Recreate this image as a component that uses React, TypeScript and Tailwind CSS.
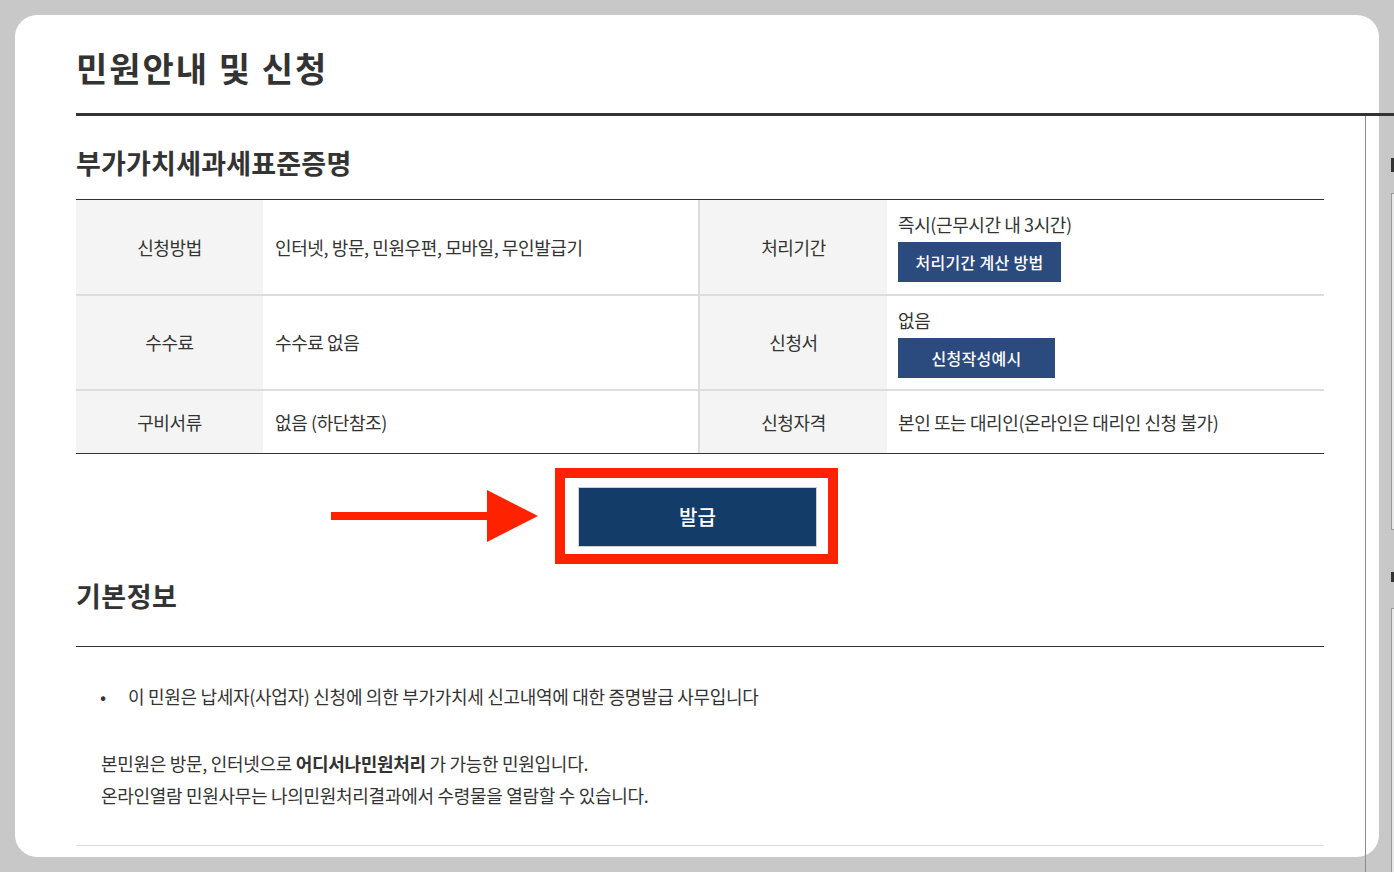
const font = {
  fontFamily: '"Noto Sans CJK KR", "Noto Sans", sans-serif',
};

type Row = {
  label1: string;
  value1: string;
  label2: string;
  value2: string;
  button?: { text: string; width: string };
  height: string;
};

const rows: Row[] = [
  {
    label1: "신청방법",
    value1: "인터넷, 방문, 민원우편, 모바일, 무인발급기",
    label2: "처리기간",
    value2: "즉시(근무시간 내 3시간)",
    button: { text: "처리기간 계산 방법", width: "w-[163px]" },
    height: "h-[96px]",
  },
  {
    label1: "수수료",
    value1: "수수료 없음",
    label2: "신청서",
    value2: "없음",
    button: { text: "신청작성예시", width: "w-[157px]" },
    height: "h-[95px]",
  },
  {
    label1: "구비서류",
    value1: "없음 (하단참조)",
    label2: "신청자격",
    value2: "본인 또는 대리인(온라인은 대리인 신청 불가)",
    height: "h-[62px]",
  },
];

function InfoTable() {
  return (
    <div className="border-t border-b border-[#333] text-[18px] tracking-[-0.4px] text-[#333]">
      {rows.map((row, i) => (
        <div
          key={row.label1}
          className={`flex ${row.height} ${i < rows.length - 1 ? "border-b-2 border-[#dddddd]" : ""}`}
        >
          <div className="w-[187px] bg-[#f4f4f4] flex items-center justify-center">
            {row.label1}
          </div>
          <div className="w-[435px] flex items-center pl-[12px]">{row.value1}</div>
          <div className="w-[2px] bg-[#dddddd]" />
          <div className="w-[187px] bg-[#f4f4f4] flex items-center justify-center">
            {row.label2}
          </div>
          <div className="flex-1 flex flex-col justify-center pl-[11px]">
            <div className="leading-[24px]">{row.value2}</div>
            {row.button && (
              <div
                className={`${row.button.width} mt-[6px] h-[40px] bg-[#2b4a7d] text-white text-[16px] tracking-[0.3px] font-medium flex items-center justify-center`}
              >
                {row.button.text}
              </div>
            )}
          </div>
        </div>
      ))}
    </div>
  );
}

function IssueButton() {
  return (
    <div className="flex items-center pl-[255px] mt-[14px]">
      {/* annotation arrow */}
      <svg width="207" height="53" viewBox="0 0 207 53">
        <rect x="0" y="22" width="157" height="8" fill="#ff2200" />
        <polygon points="156,0 207,26 156,52" fill="#ff2200" />
      </svg>
      <div className="ml-[17px] w-[283px] h-[96px] border-[10px] border-[#ff2200] pt-[9px] pl-[13px]">
        <div className="w-[239px] h-[60px] bg-[#143c68] border border-[#d0d0d0] text-white text-[20px] font-medium flex items-center justify-center">
          발급
        </div>
      </div>
    </div>
  );
}

function SideStrip() {
  return (
    <div className="w-[15px] flex flex-col items-end">
      <div className="mt-[158px] w-[3px] h-[14px] bg-[#333]" />
      <div className="mt-[21px] w-[3px] h-[337px] border-l border-t border-b border-[#9a9a9a] bg-[#e8e8e8]" />
      <div className="mt-[42px] w-[3px] h-[10px] bg-[#333]" />
      <div className="mt-[26px] w-[3px] flex-1 border-l border-t border-[#9a9a9a] bg-[#e8e8e8]" />
    </div>
  );
}

export default function App() {
  return (
    <div className="h-[872px] overflow-hidden bg-[#c9c8c9] flex" style={font}>
      <div className="ml-[15px] mt-[15px] w-[1364px] h-[842px] bg-white rounded-[22px] flex flex-col">
        <h1 className="pl-[61px] pt-[31px] text-[34px] leading-[44px] font-bold text-[#333] tracking-[2px]">
          민원안내 및 신청
        </h1>
        <div className="mt-[23px] ml-[61px] -mr-[15px] h-[3px] bg-[#333]" />

        <div className="flex flex-1">
          <div className="ml-[61px] w-[1248px] text-[#333]">
            <h2 className="mt-[29px] text-[27px] leading-[36px] font-semibold tracking-[0.2px]">
              부가가치세과세표준증명
            </h2>
            <div className="mt-[18px]">
              <InfoTable />
            </div>

            <IssueButton />

            <h2 className="mt-[14px] text-[27px] leading-[36px] font-semibold tracking-[0.5px]">
              기본정보
            </h2>
            <div className="mt-[32px] h-px bg-[#333]" />

            <ul className="mt-[37px] text-[18px] leading-[24px] tracking-[-0.3px]">
              <li className="flex pl-[24px]">
                <span className="w-[28px]">•</span>
                <span>이 민원은 납세자(사업자) 신청에 의한 부가가치세 신고내역에 대한 증명발급 사무입니다</span>
              </li>
            </ul>

            <div className="mt-[39px] pl-[25px] text-[18px] leading-[32px] tracking-[-0.3px]">
              <p>
                본민원은 방문, 인터넷으로 <b className="font-bold">어디서나민원처리</b> 가 가능한 민원입니다.
              </p>
              <p>온라인열람 민원사무는 나의민원처리결과에서 수령물을 열람할 수 있습니다.</p>
            </div>

            <div className="mt-[34px] h-px bg-[#dddddd]" />
          </div>
          <div className="ml-[41px] w-px bg-[#8c8c8c] -mb-[15px]" />
        </div>
      </div>
      <SideStrip />
    </div>
  );
}
